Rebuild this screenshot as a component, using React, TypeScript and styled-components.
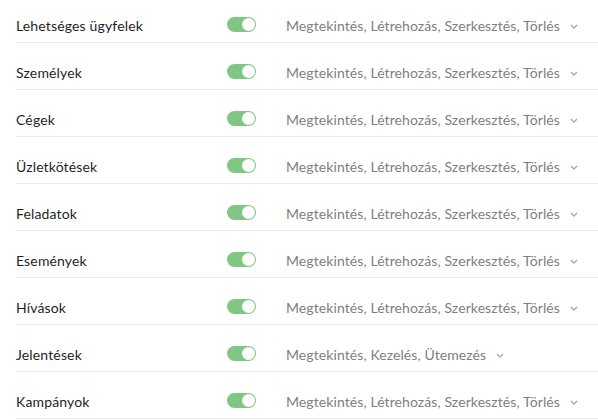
import React from "react";
import styled, { createGlobalStyle } from "styled-components";

const Global = createGlobalStyle`
  html, body { margin: 0; padding: 0; background: #fff; }
  body { font-family: Lato, "Noto Sans", sans-serif; -webkit-font-smoothing: antialiased; }
`;

const List = styled.div`
  display: flex;
  flex-direction: column;
  padding-left: 16px;
`;

const Row = styled.div`
  display: flex;
  align-items: center;
  height: 16px;
  padding: 22px 0 8px;
  border-bottom: 1px solid #ececec;
  &:first-child { padding-top: 18px; }
`;

const Label = styled.div`
  width: 211px;
  flex: none;
  font-size: 14px;
  letter-spacing: 0.15px;
  line-height: 16px;
  color: #1f1f1f;
`;

const Toggle = styled.div<{ $on: boolean }>`
  position: relative;
  flex: none;
  width: 29px;
  height: 15px;
  border-radius: 8px;
  background: ${(p) => (p.$on ? "#80c783" : "#ccc")};
  margin-right: 30px;
  margin-top: -3px;
`;

const Knob = styled.span`
  position: absolute;
  top: 1px;
  right: 1px;
  width: 13px;
  height: 13px;
  border-radius: 50%;
  background: #fff;
  box-sizing: border-box;
`;

const Perms = styled.div`
  display: flex;
  align-items: center;
  font-size: 14px;
  letter-spacing: 0.09px;
  line-height: 16px;
  color: #808080;
  white-space: nowrap;
`;

const Chevron = styled.svg`
  margin-left: 10px;
  flex: none;
`;

const full = "Megtekintés, Létrehozás, Szerkesztés, Törlés";
const rows: [string, string][] = [
  ["Lehetséges ügyfelek", full],
  ["Személyek", full],
  ["Cégek", full],
  ["Üzletkötések", full],
  ["Feladatok", full],
  ["Események", full],
  ["Hívások", full],
  ["Jelentések", "Megtekintés, Kezelés, Ütemezés"],
  ["Kampányok", full],
];

export default function App() {
  return (
    <>
      <Global />
      <List>
        {rows.map(([name, perms]) => (
          <Row key={name}>
            <Label>{name}</Label>
            <Toggle $on>
              <Knob />
            </Toggle>
            <Perms>
              {perms}
              <Chevron width="8" height="5" viewBox="0 0 8 5">
                <path d="M1 1 L4 4 L7 1" fill="none" stroke="#a8a8a8" strokeWidth="1.4" />
              </Chevron>
            </Perms>
          </Row>
        ))}
      </List>
    </>
  );
}
